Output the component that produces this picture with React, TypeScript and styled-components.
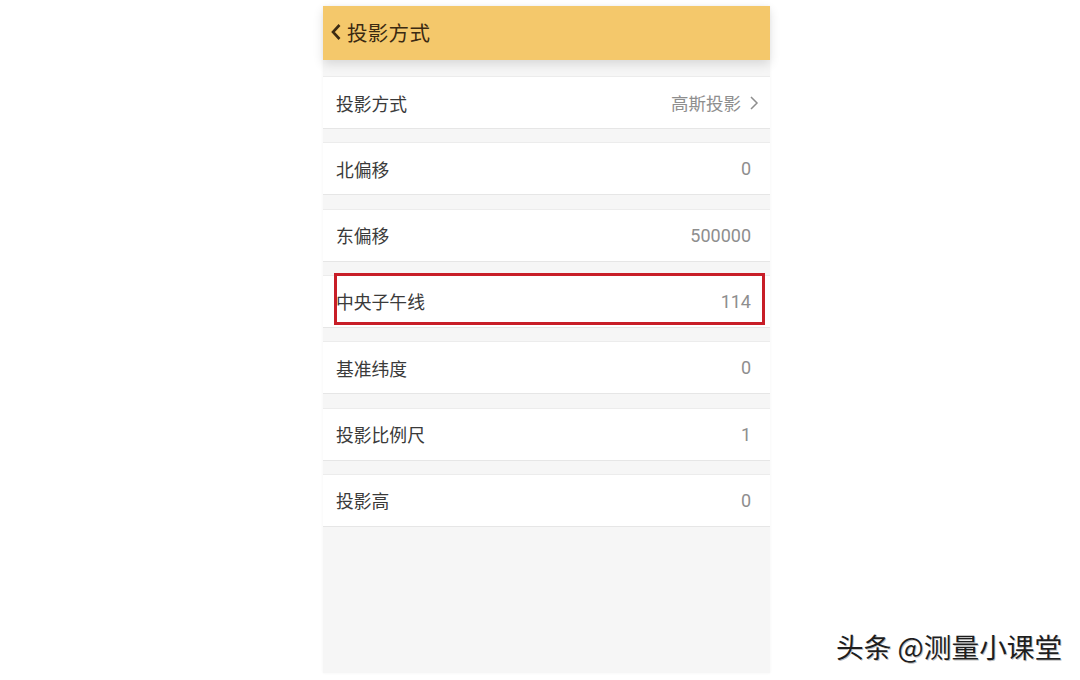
import React from "react";
import styled, { createGlobalStyle } from "styled-components";

const Global = createGlobalStyle`
  html, body { margin: 0; padding: 0; background: #ffffff; }
  body { font-family: "Noto Sans CJK SC", "Noto Sans", sans-serif; }
`;

const Page = styled.div`
  width: 1080px;
  height: 680px;
  position: relative;
  background: #ffffff;
  overflow: hidden;
`;

const Phone = styled.div`
  position: relative;
  margin-left: 323px;
  margin-top: 6px;
  width: 447px;
  height: 667px;
  background: #f6f6f6;
  box-shadow: 0 0 3px rgba(0, 0, 0, 0.05);
  display: flex;
  flex-direction: column;
`;

const Header = styled.div`
  height: 54px;
  background: #f4c86b;
  display: flex;
  align-items: center;
  padding-left: 7px;
  padding-bottom: 3px;
  box-sizing: border-box;
  gap: 5px;
  box-shadow: 0 4px 10px rgba(0, 0, 0, 0.12);
  position: relative;
  z-index: 1;
`;

const Title = styled.span`
  font-size: 20.5px;
  color: #3b2a12;
  letter-spacing: 0.3px;
`;

const List = styled.div`
  display: flex;
  flex-direction: column;
  gap: 13.33px;
  padding-top: 16px;
`;

const Row = styled.div`
  height: 53px;
  background: #ffffff;
  border-top: 1px solid #ececec;
  border-bottom: 1px solid #e6e6e6;
  box-sizing: border-box;
  display: flex;
  align-items: center;
  justify-content: space-between;
  padding: 0 19px 0 13px;
`;

const Label = styled.span`
  font-size: 17.8px;
  color: #3a3a3a;
`;

const Value = styled.span<{ $withArrow?: boolean }>`
  font-size: 18px;
  color: #8e8e8e;
  display: flex;
  align-items: center;
  gap: 8px;
  margin-right: ${(p) => (p.$withArrow ? "-8px" : "0")};
  font-family: "Roboto", "Noto Sans CJK SC", sans-serif;
`;

const ValueCJK = styled.span`
  font-family: "Noto Sans CJK SC", sans-serif;
  font-size: 17.5px;
`;

const Highlight = styled.div`
  position: absolute;
  left: 11px;
  top: 267px;
  width: 431px;
  height: 52px;
  border: 3px solid #c81e28;
  box-sizing: border-box;
  pointer-events: none;
`;

const Watermark = styled.div`
  position: absolute;
  left: 836px;
  top: 626px;
  font-size: 27.7px;
  line-height: 40px;
  color: #1e1e1e;
  text-shadow: -1px 0 0 #ffffff, 1px 1px 0 rgba(0, 0, 0, 0.25);
  font-family: "Noto Sans CJK SC", sans-serif;
`;

const Back = () => (
  <svg width="12" height="18" viewBox="0 0 12 18">
    <path d="M9.5 2 L3 9 L9.5 16" fill="none" stroke="#3b2a12" strokeWidth="2.6" />
  </svg>
);

const Chevron = () => (
  <svg width="10" height="16" viewBox="0 0 10 16">
    <path d="M2 2 L8 8 L2 14" fill="none" stroke="#8e8e8e" strokeWidth="1.5" />
  </svg>
);

const rows: { label: string; value: string; chevron?: boolean }[] = [
  { label: "投影方式", value: "高斯投影", chevron: true },
  { label: "北偏移", value: "0" },
  { label: "东偏移", value: "500000" },
  { label: "中央子午线", value: "114" },
  { label: "基准纬度", value: "0" },
  { label: "投影比例尺", value: "1" },
  { label: "投影高", value: "0" },
];

export default function App() {
  return (
    <Page>
      <Global />
      <Phone>
        <Header>
          <Back />
          <Title>投影方式</Title>
        </Header>
        <List>
          {rows.map((r) => (
            <Row key={r.label}>
              <Label>{r.label}</Label>
              <Value $withArrow={r.chevron}>
                {r.chevron ? <ValueCJK>{r.value}</ValueCJK> : r.value}
                {r.chevron && <Chevron />}
              </Value>
            </Row>
          ))}
        </List>
        <Highlight />
      </Phone>
      <Watermark>头条 @测量小课堂</Watermark>
    </Page>
  );
}
